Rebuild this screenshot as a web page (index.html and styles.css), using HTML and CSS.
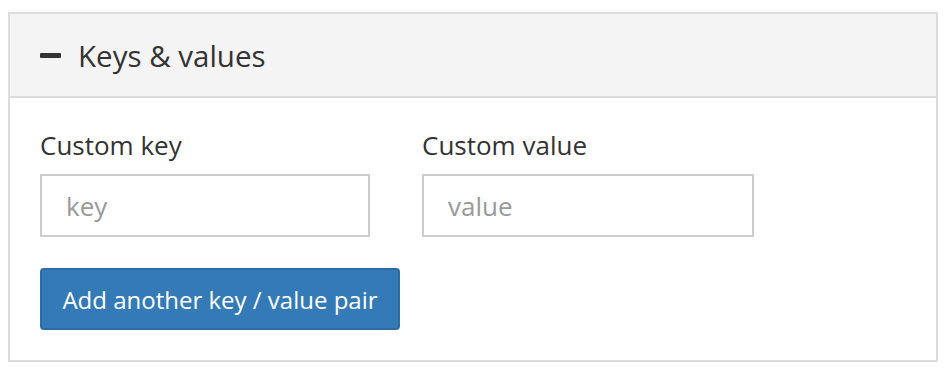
FILE: index.html
```html
<!DOCTYPE html>
<html lang="en">
<head>
  <meta charset="UTF-8" />
  <title>Keys &amp; values</title>
  <link rel="stylesheet" href="styles.css">
</head>
<body>
  <div class="panel">
    <div class="panel-heading">
      <span class="toggle"></span>
      <h2>Keys &amp; values</h2>
    </div>
    <div class="panel-body">
      <div class="pair">
        <div class="field">
          <label for="key0">Custom key</label>
          <input type="text" id="key0" placeholder="key">
        </div>
        <div class="field">
          <label for="value0">Custom value</label>
          <input type="text" id="value0" placeholder="value">
        </div>
      </div>
      <button type="button">Add another key / value pair</button>
    </div>
  </div>
</body>
</html>
```

FILE: styles.css
```css
:root {
  --border: #dddddd;
  --heading: #f4f4f4;
  --text: #333333;
  --primary: #337ab7;
}

body {
  margin: 12px 8px;
  font-family: "Open Sans", "Noto Sans", sans-serif;
  color: var(--text);
  background: #ffffff;
}

.panel {
  width: 930px;
  box-sizing: border-box;
  border: 2px solid var(--border);
}

.panel-heading {
  display: flex;
  align-items: center;
  height: 82px;
  padding-left: 30px;
  background: var(--heading);
  border-bottom: 2px solid var(--border);
}

.toggle {
  width: 21px;
  height: 5px;
  background: var(--text);
  border-radius: 1px;
  margin-right: 17px;
}

h2 {
  margin: 0;
  font-size: 29.5px;
  font-weight: 400;
}

.panel-body {
  padding: 30px 30px 30px;
}

.pair {
  display: grid;
  grid-template-columns: 330px 332px;
  gap: 52px;
}

label {
  display: block;
  font-size: 26px;
  line-height: 34px;
  margin-bottom: 12px;
}

input {
  width: 100%;
  height: 63px;
  box-sizing: border-box;
  padding: 0 24px;
  border: 2px solid #cccccc;
  font-family: inherit;
  font-size: 26px;
  color: var(--text);
}

input::placeholder {
  color: #999999;
}

button {
  display: block;
  margin-top: 31px;
  width: 360px;
  height: 62px;
  background: var(--primary);
  border: 2px solid #2e6da4;
  border-radius: 4px;
  color: #ffffff;
  font-family: inherit;
  font-size: 24px;
  cursor: pointer;
}
```
